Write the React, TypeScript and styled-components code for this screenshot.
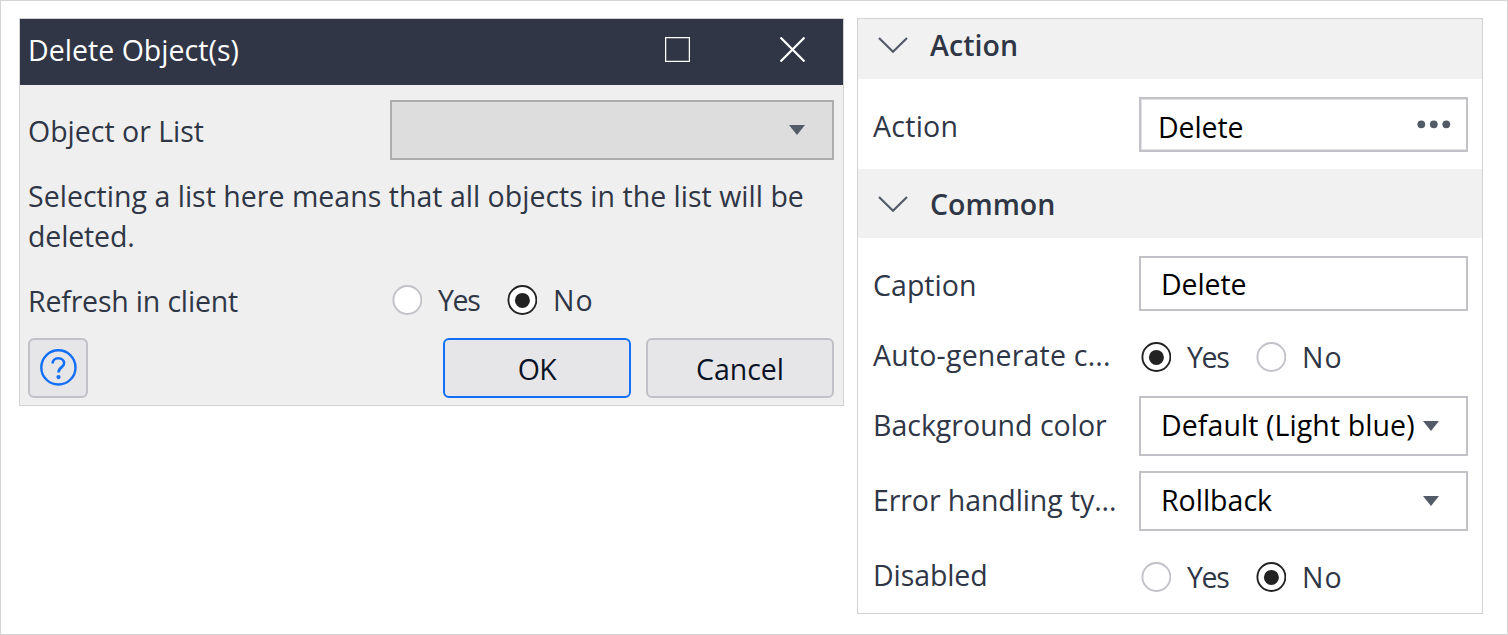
import React from 'react';
import styled, { createGlobalStyle } from 'styled-components';

const GlobalStyle = createGlobalStyle`
  *, *::before, *::after { box-sizing: border-box; }
  body {
    margin: 0;
    background: #fff;
    font-family: "Open Sans", "Segoe UI", sans-serif;
    font-size: 28.5px;
    line-height: 40px;
    color: #2f3646;
  }
`;

const Page = styled.main`
  display: flex;
  align-items: flex-start;
  gap: 13px;
  width: 1508px;
  height: 635px;
  padding: 17px 0 0 18px;
  border: 1px solid #d5d5d5;
  background: #fff;
`;

const Text = styled.span<{ $track?: number }>`
  letter-spacing: ${(p) => p.$track ?? 0}px;
  white-space: nowrap;
`;

const Dialog = styled.section`
  width: 825px;
  height: 388px;
  border: 1px solid #d3d3d5;
  background: #efefef;
`;

const TitleBar = styled.header`
  display: flex;
  justify-content: space-between;
  height: 66px;
  padding: 11px 38px 0 8px;
  background: #303646;
  color: #fff;
`;

const WindowControls = styled.div`
  display: flex;
  gap: 90px;
  padding-top: 7px;
`;

const ControlIcon = styled.svg`
  display: block;
  width: 25px;
  height: 25px;
  fill: none;
  stroke: #fff;
`;

const DialogBody = styled.div`
  padding: 15px 9px 0 8px;
`;

const DialogRow = styled.div<{ $height: number }>`
  display: flex;
  align-items: flex-start;
  height: ${(p) => p.$height}px;
`;

const DialogLabel = styled.div<{ $top: number; $width: number }>`
  width: ${(p) => p.$width}px;
  flex: none;
  padding-top: ${(p) => p.$top}px;
`;

const Note = styled.p`
  margin: 16px 0 24px;
`;

const Line = styled(Text)`
  display: block;
`;

const ButtonRow = styled.div`
  display: flex;
  gap: 15px;
  margin-top: 18px;
`;

const Button = styled.button<{ $primary?: boolean }>`
  width: 188px;
  height: 60px;
  padding: 1px 0 0;
  border: 2px solid ${(p) => (p.$primary ? '#146ff8' : '#c1c1c8')};
  border-radius: 6px;
  background: #e6e6e9;
  color: #0a1325;
  font: inherit;
  line-height: 40px;
`;

const HelpButton = styled(Button)`
  display: flex;
  align-items: center;
  justify-content: center;
  width: 60px;
  margin-right: auto;
  padding: 0;
`;

const Select = styled.div<{ $disabled?: boolean; $width: number }>`
  display: flex;
  justify-content: space-between;
  width: ${(p) => p.$width}px;
  height: 60px;
  padding: 7px 27px 0 20px;
  border: 2px solid ${(p) => (p.$disabled ? '#acacac' : '#c1c1c8')};
  background: ${(p) => (p.$disabled ? '#dddddd' : '#fff')};
  color: #000;
`;

const Caret = styled.svg`
  display: block;
  flex: none;
  width: 16px;
  height: 10px;
  margin-top: 16px;
  fill: #535b69;
`;

const Options = styled.div<{ $top?: number }>`
  display: flex;
  padding-top: ${(p) => p.$top ?? 0}px;
`;

const Option = styled.div`
  display: flex;
  align-items: center;
  gap: 16px;
  width: 115px;
`;

const RadioMark = styled.svg`
  display: block;
  flex: none;
  width: 30px;
  height: 30px;
`;

const Panel = styled.section`
  width: 626px;
  height: 596px;
  border: 1px solid #d3d3d5;
  background: #fff;
`;

const SectionHeader = styled.header<{ $height: number }>`
  display: flex;
  align-items: flex-end;
  gap: 22px;
  height: ${(p) => p.$height}px;
  padding: 0 0 14px 20px;
  background: #f1f1f1;
  font-weight: 600;
`;

const Chevron = styled.svg`
  display: block;
  width: 30px;
  height: 40px;
  fill: none;
  stroke: #535b69;
  stroke-width: 2.2;
`;

const SectionBody = styled.div`
  padding: 18px 14px 17px 15px;
`;

const Property = styled.div<{ $height?: number; $gap?: number }>`
  display: flex;
  height: ${(p) => p.$height ?? 60}px;
  margin-bottom: ${(p) => p.$gap ?? 15}px;
`;

const PropertyLabel = styled.div`
  width: 266px;
  flex: none;
  padding-top: 9px;
`;

const PropertyOptions = styled(Options)`
  padding: 11px 0 9px 2px;
`;

const Input = styled.div`
  width: 329px;
  height: 55px;
  padding: 6px 20px 0;
  border: 2px solid #c1c1c8;
  color: #000;
`;

const PickerInput = styled(Input)`
  display: flex;
  justify-content: space-between;
  padding: 8px 15px 0 17px;
  box-shadow: inset 1px 1px 0 #e2e2e6, inset 0 -1px 0 #e2e2e6;
`;

const Dots = styled.svg`
  display: block;
  width: 34px;
  height: 10px;
  margin-top: 12px;
  fill: #535b69;
`;

const CaretIcon = () => (
  <Caret viewBox="0 0 16 10">
    <path d="M0 0H16L8 10Z" />
  </Caret>
);

const ChevronIcon = () => (
  <Chevron viewBox="0 0 30 40">
    <path d="M1 13L15 26.8L29 13" />
  </Chevron>
);

const Radio = ({ checked }: { checked: boolean }) => (
  <RadioMark viewBox="0 0 30 30">
    <circle cx="15.4" cy="15" r="14" fill="#fff" stroke={checked ? '#222' : '#c1c1c8'} strokeWidth="1.9" />
    {checked && <circle cx="15.4" cy="15.4" r="7.5" fill="#222" />}
  </RadioMark>
);

const YesNo = ({ value }: { value: boolean }) => (
  <>
    <Option>
      <Radio checked={value} />
      <Text $track={-1.4}>Yes</Text>
    </Option>
    <Option>
      <Radio checked={!value} />
      <Text $track={1}>No</Text>
    </Option>
  </>
);

export default function App() {
  return (
    <>
      <GlobalStyle />
      <Page>
        <Dialog>
          <TitleBar>
            <Text $track={0.03}>Delete Object(s)</Text>
            <WindowControls>
              <ControlIcon viewBox="0 0 25 25">
                <rect x="0.6" y="0.6" width="23.8" height="23.8" strokeWidth="1.3" />
              </ControlIcon>
              <ControlIcon viewBox="0 0 25 25">
                <path d="M0.5 0.5L24.5 24.5M24.5 0.5L0.5 24.5" strokeWidth="2.2" />
              </ControlIcon>
            </WindowControls>
          </TitleBar>
          <DialogBody>
            <DialogRow $height={60}>
              <DialogLabel $top={11} $width={362}>
                <Text>Object or List</Text>
              </DialogLabel>
              <Select $disabled $width={444}>
                <span />
                <CaretIcon />
              </Select>
            </DialogRow>
            <Note>
              <Line $track={0.02}>Selecting a list here means that all objects in the list will be</Line>
              <Line $track={-0.15}>deleted.</Line>
            </Note>
            <DialogRow $height={40}>
              <DialogLabel $top={1} $width={364}>
                <Text $track={-0.18}>Refresh in client</Text>
              </DialogLabel>
              <Options>
                <YesNo value={false} />
              </Options>
            </DialogRow>
            <ButtonRow>
              <HelpButton aria-label="Help">
                <svg width="38" height="38" viewBox="0 0 38 38" fill="none" stroke="#146ff8">
                  <circle cx="19.4" cy="18.4" r="17.1" strokeWidth="2.4" />
                  <path d="M13.6 14.6C13.6 11.3 16 9.3 19.3 9.3C22.7 9.3 25.1 11.3 25.1 14.2C25.1 18.4 19.5 18 19.5 23.6" strokeWidth="2.6" />
                  <circle cx="19.5" cy="28.1" r="2.1" fill="#146ff8" stroke="none" />
                </svg>
              </HelpButton>
              <Button $primary>
                <Text $track={-0.47}>OK</Text>
              </Button>
              <Button>
                <Text>Cancel</Text>
              </Button>
            </ButtonRow>
          </DialogBody>
        </Dialog>

        <Panel>
          <SectionHeader $height={60}>
            <ChevronIcon />
            <Text $track={0.08}>Action</Text>
          </SectionHeader>
          <SectionBody>
            <Property $height={55} $gap={0}>
              <PropertyLabel>
                <Text $track={0.27}>Action</Text>
              </PropertyLabel>
              <PickerInput>
                <Text $track={-0.11}>Delete</Text>
                <Dots viewBox="0 0 34 10">
                  <circle cx="4.3" cy="5.3" r="3.9" />
                  <circle cx="16.8" cy="5.3" r="3.9" />
                  <circle cx="29.3" cy="5.3" r="3.9" />
                </Dots>
              </PickerInput>
            </Property>
          </SectionBody>
          <SectionHeader $height={69}>
            <ChevronIcon />
            <Text>Common</Text>
          </SectionHeader>
          <SectionBody>
            <Property $height={55}>
              <PropertyLabel>
                <Text $track={0.05}>Caption</Text>
              </PropertyLabel>
              <Input>
                <Text $track={-0.11}>Delete</Text>
              </Input>
            </Property>
            <Property $gap={10}>
              <PropertyLabel>
                <Text $track={0.2}>Auto-generate c...</Text>
              </PropertyLabel>
              <PropertyOptions>
                <YesNo value={true} />
              </PropertyOptions>
            </Property>
            <Property>
              <PropertyLabel>
                <Text>Background color</Text>
              </PropertyLabel>
              <Select $width={329}>
                <Text $track={0.09}>Default (Light blue)</Text>
                <CaretIcon />
              </Select>
            </Property>
            <Property>
              <PropertyLabel>
                <Text $track={-0.09}>Error handling ty...</Text>
              </PropertyLabel>
              <Select $width={329}>
                <Text>Rollback</Text>
                <CaretIcon />
              </Select>
            </Property>
            <Property $gap={0}>
              <PropertyLabel>
                <Text $track={-0.1}>Disabled</Text>
              </PropertyLabel>
              <PropertyOptions>
                <YesNo value={false} />
              </PropertyOptions>
            </Property>
          </SectionBody>
        </Panel>
      </Page>
    </>
  );
}
